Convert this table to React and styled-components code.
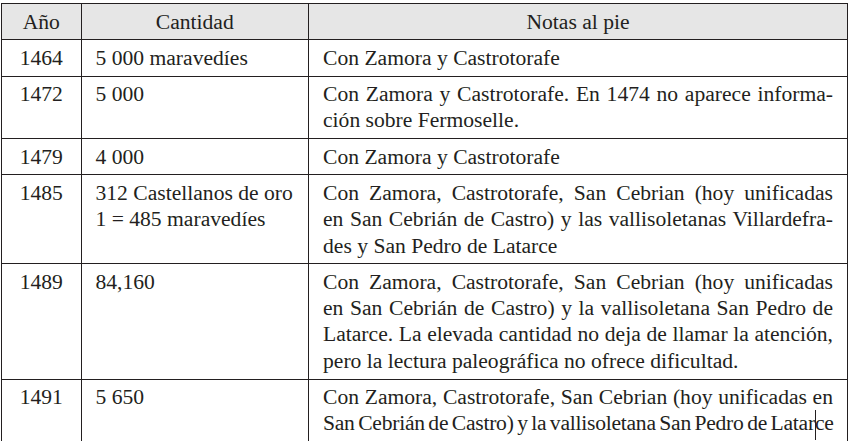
import React from "react";
import styled, { createGlobalStyle } from "styled-components";

const rows = [
  {
    year: "1464",
    amount: ["5 000 maravedíes"],
    notes: ["Con Zamora y Castrotorafe"],
  },
  {
    year: "1472",
    amount: ["5 000"],
    notes: [
      "Con Zamora y Castrotorafe. En 1474 no aparece informa-",
      "ción sobre Fermoselle.",
    ],
  },
  {
    year: "1479",
    amount: ["4 000"],
    notes: ["Con Zamora y Castrotorafe"],
  },
  {
    year: "1485",
    amount: ["312 Castellanos de oro", "1 = 485 maravedíes"],
    notes: [
      "Con Zamora, Castrotorafe, San Cebrian (hoy unificadas",
      "en San Cebrián de Castro) y las vallisoletanas Villardefra-",
      "des y San Pedro de Latarce",
    ],
  },
  {
    year: "1489",
    amount: ["84,160"],
    notes: [
      "Con Zamora, Castrotorafe, San Cebrian (hoy unificadas",
      "en San Cebrián de Castro) y la vallisoletana San Pedro de",
      "Latarce. La elevada cantidad no deja de llamar la atención,",
      "pero la lectura paleográfica no ofrece dificultad.",
    ],
  },
  {
    year: "1491",
    amount: ["5 650"],
    notes: [
      "Con Zamora, Castrotorafe, San Cebrian (hoy unificadas en",
      "San Cebrián de Castro) y la vallisoletana San Pedro de Latarce",
    ],
    tightLast: true,
    caret: true,
  },
];

const App = () => {
  return (
    <>
      <GlobalStyle />
      <Table>
        <colgroup>
          <col style={{ width: 79.5 }} />
          <col style={{ width: 227.5 }} />
          <col style={{ width: 539 }} />
        </colgroup>
        <thead>
          <tr>
            <Head>Año</Head>
            <Head>Cantidad</Head>
            <Head>Notas al pie</Head>
          </tr>
        </thead>
        <tbody>
          {rows.map((row) => (
            <tr key={row.year}>
              <YearCell>{row.year}</YearCell>
              <Cell>
                {row.amount.map((line) => (
                  <Line key={line}>{line}</Line>
                ))}
              </Cell>
              <Cell>
                {row.notes.map((line, i) => {
                  const last = i === row.notes.length - 1;
                  if (last && row.caret) {
                    return (
                      <Line key={line} $tight>
                        {line.slice(0, -2)}
                        <Caret />
                        {line.slice(-2)}
                      </Line>
                    );
                  }
                  return (
                    <Line key={line} $justify={!last} $tight={last && row.tightLast}>
                      {line}
                    </Line>
                  );
                })}
              </Cell>
            </tr>
          ))}
        </tbody>
      </Table>
    </>
  );
};

const GlobalStyle = createGlobalStyle`
  body {
    margin: 0;
    background: #ffffff;
    font-family: "Liberation Serif", "Times New Roman", serif;
    color: #231f20;
  }
`;

const Table = styled.table`
  margin: 3px 0 0 1px;
  width: 846px;
  table-layout: fixed;
  border-collapse: collapse;
  border: 1px solid #231f20;
  font-family: "Liberation Serif", "Times New Roman", serif;
  font-size: 21.6px;
  line-height: 26.3px;
  color: #231f20;
`;

const Head = styled.th`
  background: #e6e6e6;
  border: 1px solid #231f20;
  padding: 4.5px 14px;
  font-family: "Liberation Serif", "Times New Roman", serif;
  font-weight: normal;
  text-align: center;
`;

const Cell = styled.td`
  border: 1px solid #231f20;
  padding: 4.5px 14px;
  vertical-align: top;
  text-align: left;
  font-family: "Liberation Serif", "Times New Roman", serif;
`;

const YearCell = styled(Cell)`
  padding: 4.5px 0;
  text-align: center;
`;

const Line = styled.div`
  white-space: nowrap;
  text-align: ${(p) => (p.$justify ? "justify" : "left")};
  text-align-last: ${(p) => (p.$justify ? "justify" : "left")};
  letter-spacing: ${(p) => (p.$tight ? "-0.25px" : "normal")};
  word-spacing: ${(p) => (p.$tight ? "-1.6px" : "normal")};
`;

const Caret = styled.span`
  position: relative;
  &::after {
    content: "";
    position: absolute;
    left: 0;
    top: -1px;
    width: 1px;
    height: 30px;
    background: #231f20;
  }
`;

export default App;
